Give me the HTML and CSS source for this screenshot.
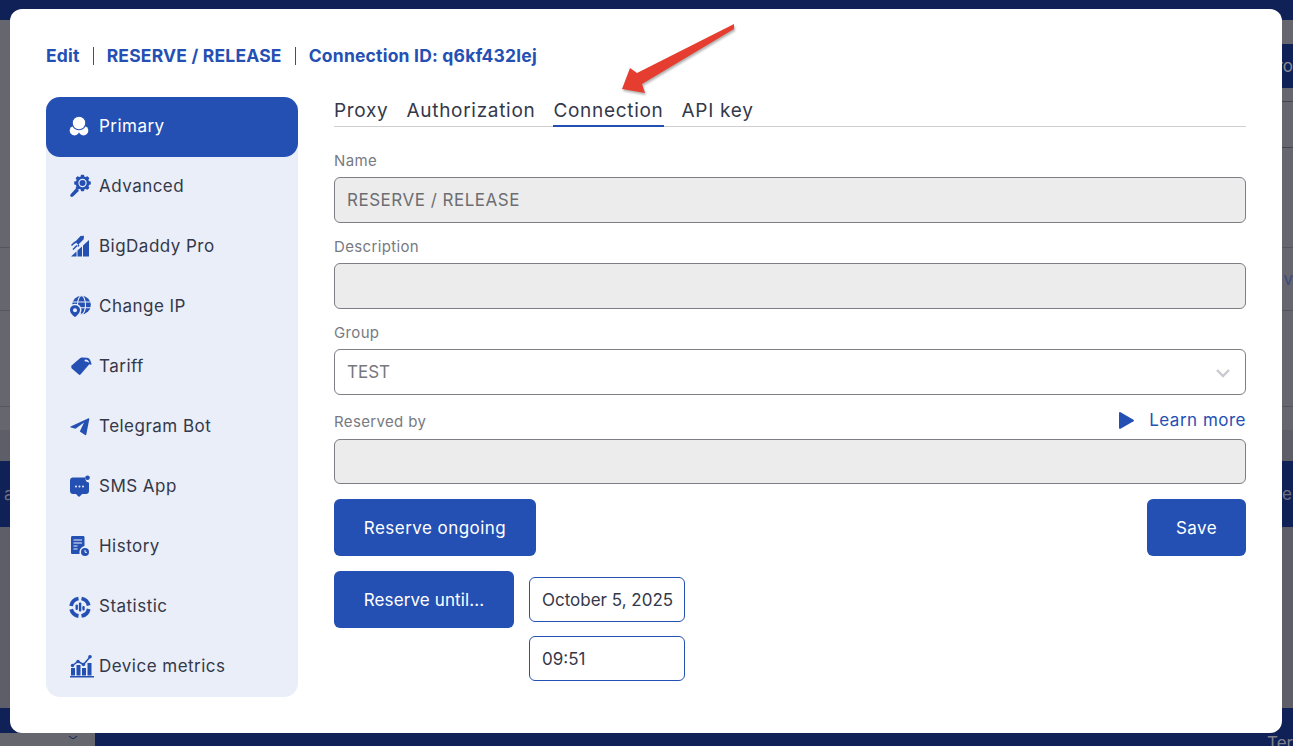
FILE: index.html
```html
<!DOCTYPE html>
<html lang="en">
<head>
<meta charset="utf-8">
<title>Edit connection</title>
<link rel="stylesheet" href="styles.css">
</head>
<body>
<div class="backdrop">
  <div class="bg-row bg-navy h20"></div>
  <div class="bg-row h24"></div>
  <div class="bg-row h44 bg-right"><span class="bg-chip bg-navy">ro</span></div>
  <div class="bg-row h13"></div>
  <div class="bg-row h46 edge-line"></div>
  <div class="bg-row h100 edge-line"></div>
  <div class="bg-row h63 line-top bg-right"><span class="bg-ghost">v</span></div>
  <div class="bg-row h96 line-top"></div>
  <div class="bg-row h24 line-top"></div>
  <div class="bg-row h31 bg-dim"></div>
  <div class="bg-row h66 bg-navy bg-split"><span>a</span><span>e</span></div>
  <div class="bg-row h181 bg-dim"></div>
  <div class="bg-row h25 bg-navy"></div>
  <div class="bg-row h13 bg-navy bg-foot"><span class="bg-cell"><svg class="bg-chev" viewBox="0 0 18 6"><path d="M1 0l8 6 8-6" fill="none" stroke="#102158" stroke-width="2"/></svg></span><span class="bg-ghost">Ter</span></div>
</div>

<div class="modal">
  <header class="modal-title">
    <span>Edit</span>
    <span>RESERVE / RELEASE</span>
    <span>Connection ID: q6kf432lej</span>
  </header>
  <div class="modal-body">
    <nav class="side">
      <a class="side-item active">
        <svg class="ico" viewBox="0 0 24 24"><circle cx="6.500" cy="15.700" r="4.800" fill="#fff"/><circle cx="15.500" cy="15.700" r="4.800" fill="#fff"/><circle cx="11" cy="8" r="6.800" fill="#fff" stroke="#2550b3" stroke-width="1.100"/></svg>
        Primary
      </a>
      <a class="side-item">
        <svg class="ico" viewBox="0 0 24 24"><g fill="#2550b3"><path d="M8.300 13l2.700 2.700-6 5.800c-.7.600-1.700.6-2.300 0s-.6-1.600 0-2.300z"/><circle cx="14.500" cy="8" r="6.800"/><rect x="12.800" y="-.3" width="3.400" height="16.600" rx=".8"/><rect x="6.200" y="6.300" width="16.600" height="3.400" rx=".8"/><rect x="12.800" y="-.3" width="3.400" height="16.600" rx=".8" transform="rotate(45 14.500 8)"/><rect x="12.800" y="-.3" width="3.400" height="16.600" rx=".8" transform="rotate(-45 14.500 8)"/></g><circle cx="14.500" cy="8" r="4.200" fill="#e9eef8"/><circle cx="14.500" cy="8" r="3" fill="#2550b3"/></svg>
        Advanced
      </a>
      <a class="side-item">
        <svg class="ico" viewBox="0 0 24 24"><path fill="#2550b3" d="M3 21.500l5.500-5V21.500zM9.500 15.500l4.500-4v10H9.500zM15 10.500l6-5.500v16.500h-6z"/><path fill="#2550b3" d="M12.500 1l3.500-.2-.3 3.500-5.500 5.500-3-3zM6 7l1.800-1 1 1-2.300 2.300zM9.500 11l1-1.800 1 1-1.200 1.800z"/><path stroke="#2550b3" stroke-width="1.500" d="M3.500 10.500l3-3M5 14.500l4-4"/></svg>
        BigDaddy Pro
      </a>
      <a class="side-item">
        <svg class="ico" viewBox="0 0 24 24"><circle cx="13.500" cy="10" r="9.300" fill="#2550b3"/><g stroke="#e9eef8" stroke-width="1.100" fill="none"><path d="M3 7h21M3 12.800h21"/><ellipse cx="13.500" cy="10" rx="4" ry="9.300"/></g><path fill="#e9eef8" d="M7 8.800c3.600 0 6.500 2.800 6.500 6.200 0 3.400-3.700 6.800-6.500 8.800-2.800-2-6.500-5.400-6.500-8.800 0-3.400 2.900-6.200 6.500-6.200z"/><path fill="#2550b3" d="M7 10.300c2.800 0 5 2.100 5 4.700S9.200 20.500 7 22.100C4.800 20.500 2 18 2 15s2.200-4.700 5-4.700z"/><circle cx="7" cy="15.200" r="2" fill="#e9eef8"/></svg>
        Change IP
      </a>
      <a class="side-item">
        <svg class="ico" viewBox="0 0 24 24"><path fill="#2550b3" d="M2.700 11.300L12 3.200c.5-.5 1.200-.7 1.900-.7l5.100.2c1.300.1 2.200.7 3 2 .7 1.400 1.300 3 1.500 4.400.1.500-.3.900-.8.700l-1.400-.5-8.800 10.200c-.5.500-1.200.5-1.700.1l-7-6.100c-.6-.6-.7-1.500-.1-2.200z"/><path fill="#e9eef8" d="M17.500 4.500c1.800 0 3 1 3.800 3.400-1.200-.7-2.700-1.500-4-1.300-.9.100-1.100-2.100.2-2.100z"/></svg>
        Tariff
      </a>
      <a class="side-item">
        <svg class="ico" viewBox="0 0 24 24"><path fill="#2550b3" d="M2.600 11.500L20.500 3.300c.5-.2.900.2.800.7l-3 15.500c-.1.600-.7.800-1.200.5l-5.300-3.600L16 7.500 7.500 13.800 3 12.600c-.6-.2-.9-.8-.4-1.100z"/></svg>
        Telegram Bot
      </a>
      <a class="side-item">
        <svg class="ico" viewBox="0 0 24 24"><path fill="#2550b3" d="M5 2.500h12.500c-.5 2.700 1.300 5 3.500 5V16c0 1.700-1.300 3-3 3h-3.800l-2.700 2.600c-.3.300-.7.300-1 0L8 19H5c-1.700 0-3-1.300-3-3V5.500c0-1.700 1.300-3 3-3z"/><circle cx="19.500" cy="2.800" r="2.300" fill="#2550b3"/><g fill="#e9eef8"><circle cx="8" cy="11.500" r="1"/><circle cx="11.500" cy="11.500" r="1"/><circle cx="15" cy="11.500" r="1"/></g></svg>
        SMS App
      </a>
      <a class="side-item">
        <svg class="ico" viewBox="0 0 24 24"><path fill="#2550b3" d="M4.500 1h10.500c1 0 1.500.5 1.500 1.500V11a6.500 6.500 0 0 0-5 8H4.500C3.500 19 3 18.500 3 17.500v-15C3 1.500 3.500 1 4.500 1z"/><g stroke="#e9eef8" stroke-width="1.200"><path d="M5.500 5h8.500M5.500 8h8.500M5.500 11h4M5.500 14h4"/></g><circle cx="17" cy="17" r="4" fill="#2550b3"/><path d="M17 15v2.300h2" stroke="#e9eef8" stroke-width="1" fill="none"/></svg>
        History
      </a>
      <a class="side-item">
        <svg class="ico" viewBox="0 0 24 24"><g fill="none" stroke="#2550b3" stroke-width="3.800"><path d="M13.500 3.500A9 9 0 0 1 20.700 10.500"/><path d="M20.700 14A9 9 0 0 1 13.500 21"/><path d="M10.500 21A9 9 0 0 1 3.200 14.300"/><path d="M3.100 11A9 9 0 0 1 10.500 3.500"/></g><g fill="#2550b3"><rect x="7.500" y="9.500" width="2.400" height="5.500" rx="1"/><rect x="10.900" y="7.500" width="2.400" height="9" rx="1"/><rect x="14.300" y="11" width="2.400" height="4.500" rx="1"/></g></svg>
        Statistic
      </a>
      <a class="side-item">
        <svg class="ico" viewBox="0 0 24 24"><g fill="#2550b3"><rect x="2" y="21" width="24" height="1.500"/><rect x="3" y="13" width="4" height="7.500"/><rect x="8.500" y="10" width="4" height="10.500"/><rect x="14" y="13" width="4" height="7.500"/><rect x="19.500" y="8" width="4" height="12.500"/><circle cx="4.500" cy="10.500" r="1.700"/><circle cx="10" cy="6.500" r="1.700"/><circle cx="15.500" cy="9.500" r="1.700"/><circle cx="22" cy="1.800" r="1.800"/></g><path d="M4.500 10.500L10 6.500l5.500 3L22 2" fill="none" stroke="#2550b3" stroke-width="1.500"/></svg>
        Device metrics
      </a>
    </nav>

    <main class="content">
      <div class="tabs">
        <span class="tab">Proxy</span>
        <span class="tab">Authorization</span>
        <span class="tab tab-active">Connection</span>
        <span class="tab">API key</span>
      </div>

      <div class="field">
        <div class="label-row"><label class="label">Name</label></div>
        <div class="input input-disabled">RESERVE / RELEASE</div>
      </div>
      <div class="field">
        <div class="label-row"><label class="label">Description</label></div>
        <div class="input input-disabled"></div>
      </div>
      <div class="field">
        <div class="label-row"><label class="label">Group</label></div>
        <div class="input input-select">TEST
          <svg class="chev" viewBox="0 0 16 10"><path d="M2 2l6 6 6-6" fill="none" stroke="#c9c9cf" stroke-width="2.400"/></svg>
        </div>
      </div>
      <div class="field field-reserved">
        <div class="label-row"><label class="label">Reserved by</label>
          <a class="learn"><svg class="play" viewBox="0 0 15 17"><path d="M0 1.200C0 .3.800-.2 1.500.2l13 7.500c.5.300.5 1.200 0 1.500l-13 7.600C.8 17.200 0 16.700 0 15.800z" fill="#2550b3"/></svg>Learn more</a>
        </div>
        <div class="input input-disabled input-45"></div>
      </div>

      <div class="actions">
        <button class="btn btn-ongoing">Reserve ongoing</button>
        <button class="btn btn-save">Save</button>
      </div>
      <div class="until">
        <button class="btn btn-until">Reserve until...</button>
        <div class="until-inputs">
          <div class="mini mini-date">October 5, 2025</div>
          <div class="mini">09:51</div>
        </div>
      </div>
    </main>
  </div>
</div>

<svg class="arrow" viewBox="0 0 130 80" aria-hidden="true"><path d="M114 2L17 51l-7-5L2 67l23 4-3-9L114 7z" fill="#e53e30"/></svg>
</body>
</html>
```
FILE: styles.css
```css
* { box-sizing: border-box; }
html, body { margin: 0; height: 100%; overflow: hidden; }
body {
  position: relative;
  width: 1293px;
  height: 746px;
  font-family: Inter, "Noto Sans", "Liberation Sans", sans-serif;
  color: #2f3345;
  background: #66666f;
}

/* dimmed page behind the dialog */
.backdrop { display: flex; flex-direction: column; height: 746px; }
.bg-row { flex: none; background: #66666f; color: #8a8a95; font-size: 17px; overflow: hidden; }
.bg-navy { background: #102158; }
.bg-dim { background: #5e5e69; }
.h13 { height: 13px; } .h20 { height: 20px; } .h24 { height: 24px; } .h25 { height: 25px; }
.h31 { height: 31px; } .h44 { height: 44px; } .h46 { height: 46px; } .h63 { height: 63px; }
.h66 { height: 66px; } .h96 { height: 96px; } .h100 { height: 100px; } .h181 { height: 181px; }
.line-top { border-top: 1px solid #55555e; }
.edge-line { background: linear-gradient(#45454e, #45454e) right top / 30px 1px no-repeat #66666f; }
.bg-right { display: flex; justify-content: flex-end; align-items: center; }
.bg-chip { display: flex; align-items: center; height: 100%; width: 100px; justify-content: flex-end; }
.bg-ghost { color: #80808b; }
.bg-right .bg-ghost { color: #3c4a80; }
.bg-split { display: flex; justify-content: space-between; align-items: center; padding: 0 1px 0 4px; color: #6f7080; }
.bg-foot { display: flex; justify-content: space-between; }
.bg-cell { display: flex; justify-content: flex-end; align-items: flex-end; width: 95px; padding: 0 13px 7px 0; background: #66666f; }
.bg-chev { width: 18px; height: 3px; }

/* dialog */
.modal {
  position: absolute;
  left: 10px;
  top: 9px;
  width: 1272px;
  height: 724px;
  padding: 37px 36px 0;
  background: #fff;
  border-radius: 12px;
}
.modal-title { display: flex; height: 20px; align-items: center; font-size: 17.500px; font-weight: 700; color: #2550b3; letter-spacing: .2px; }
.modal-title span { display: flex; align-items: center; height: 18px; line-height: 18px; }
.modal-title span + span { margin-left: 13px; padding-left: 13px; border-left: 1px solid #2550b3; }
.modal-body { display: flex; gap: 36px; margin-top: 31px; }

/* sidebar */
.side { width: 252px; height: 600px; flex: none; background: #e9eef8; border-radius: 14px; }
.side-item { display: flex; align-items: center; gap: 7px; height: 60px; padding: 0 0 2px 22px; font-size: 17px; letter-spacing: .48px; color: #343849; }
.side-item.active { background: #2550b3; color: #fff; border-radius: 14px; }
.ico { width: 24px; height: 24px; flex: none; margin-top: 2px; overflow: visible; }

/* main column */
.content { width: 912px; flex: none; }
.tabs { display: flex; gap: 18px; height: 30px; border-bottom: 1px solid #cfcfd2; font-size: 19px; letter-spacing: .7px; line-height: 27px; }
.tab { height: 30px; color: #343849; }
.tab-active { border-bottom: 2px solid #2550b3; }

.field { margin-top: 14px; }
.tabs + .field { margin-top: 24px; }
.label-row { display: flex; justify-content: space-between; align-items: center; height: 19px; margin-bottom: 7px; font-size: 15px; color: #777a82; }
.label { letter-spacing: .35px; }
.field-reserved .label-row { height: 24px; margin-bottom: 6px; }
.learn { display: flex; align-items: center; margin-top: -2px; font-size: 17px; letter-spacing: .5px; color: #2550b3; }
.play { width: 15px; height: 17px; margin-right: 15px; }

.input { display: flex; align-items: center; height: 46px; padding: 0 12px; border: 1px solid #7e7e84; border-radius: 6px; font-size: 17px; letter-spacing: .5px; color: #6d6e73; }
.input-45 { height: 45px; }
.input-disabled { background: #ececec; }
.input-select { justify-content: space-between; color: #77787d; letter-spacing: 0; }
.chev { width: 16px; height: 10px; margin-right: 2px; margin-top: 2px; }

.actions { display: flex; justify-content: space-between; margin-top: 15px; }
.btn { display: block; height: 57px; padding: 0; border: 0; border-radius: 6px; background: #2550b3; color: #fff; font: inherit; font-size: 17px; letter-spacing: .45px; }
.btn-ongoing { width: 202px; }
.btn-save { width: 99px; }
.btn-until { width: 180px; letter-spacing: .12px; }
.until { display: flex; gap: 15px; margin-top: 15px; }
.until-inputs { padding-top: 6px; }
.mini { display: flex; align-items: center; width: 156px; height: 45px; padding: 0 12px; border: 1px solid #2550b3; border-radius: 6px; font-size: 17px; letter-spacing: 0; white-space: nowrap; color: #343849; }
.mini + .mini { margin-top: 14px; }

/* annotation arrow laid on the screenshot */
.arrow { position: absolute; left: 620px; top: 22px; width: 130px; height: 80px; filter: drop-shadow(1px 2px 1px rgba(0,0,0,.3)); }
```
